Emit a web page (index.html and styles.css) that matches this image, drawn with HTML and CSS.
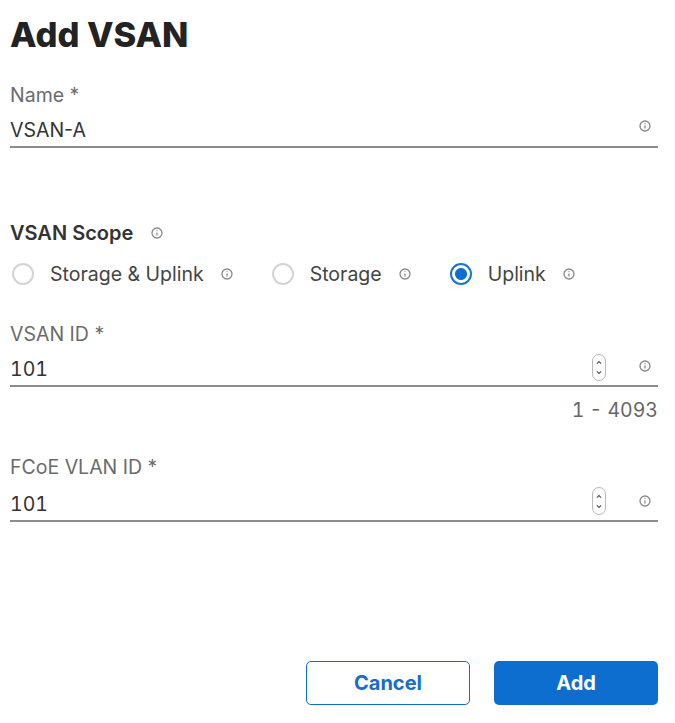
FILE: index.html
```html
<!DOCTYPE html>
<html lang="en">
<head>
  <meta charset="UTF-8">
  <title>Add VSAN</title>
  <link rel="stylesheet" href="styles.css">
</head>
<body>
  <div class="wrapper">
    <h1 class="title">Add VSAN</h1>

    <div class="field field-name">
      <div class="label">Name *</div>
      <div class="input-row">
        <span class="value">VSAN-A</span>
        <svg class="info" viewBox="0 0 12 12"><circle cx="6" cy="6" r="5" /><line x1="6" y1="5.4" x2="6" y2="8.4" /><circle class="dot" cx="6" cy="3.6" r="0.7" /></svg>
      </div>
    </div>

    <div class="scope">
      <div class="scope-title">VSAN Scope
        <svg class="info" viewBox="0 0 12 12"><circle cx="6" cy="6" r="5" /><line x1="6" y1="5.4" x2="6" y2="8.4" /><circle class="dot" cx="6" cy="3.6" r="0.7" /></svg>
      </div>
      <div class="radios">
        <label class="radio"><span class="circle"></span>Storage &amp; Uplink
          <svg class="info" viewBox="0 0 12 12"><circle cx="6" cy="6" r="5" /><line x1="6" y1="5.4" x2="6" y2="8.4" /><circle class="dot" cx="6" cy="3.6" r="0.7" /></svg>
        </label>
        <label class="radio"><span class="circle"></span>Storage
          <svg class="info" viewBox="0 0 12 12"><circle cx="6" cy="6" r="5" /><line x1="6" y1="5.4" x2="6" y2="8.4" /><circle class="dot" cx="6" cy="3.6" r="0.7" /></svg>
        </label>
        <label class="radio checked"><span class="circle"></span>Uplink
          <svg class="info" viewBox="0 0 12 12"><circle cx="6" cy="6" r="5" /><line x1="6" y1="5.4" x2="6" y2="8.4" /><circle class="dot" cx="6" cy="3.6" r="0.7" /></svg>
        </label>
      </div>
    </div>

    <div class="field field-id">
      <div class="label">VSAN ID *</div>
      <div class="input-row">
        <span class="value num">101</span>
        <span class="stepper">
          <svg viewBox="0 0 14 27"><polyline points="4.5,9 7,6.5 9.5,9" /><polyline points="4.5,18 7,20.5 9.5,18" /></svg>
        </span>
        <svg class="info" viewBox="0 0 12 12"><circle cx="6" cy="6" r="5" /><line x1="6" y1="5.4" x2="6" y2="8.4" /><circle class="dot" cx="6" cy="3.6" r="0.7" /></svg>
      </div>
      <div class="hint num">1 - 4093</div>
    </div>

    <div class="field field-fcoe">
      <div class="label">FCoE VLAN ID *</div>
      <div class="input-row">
        <span class="value num">101</span>
        <span class="stepper">
          <svg viewBox="0 0 14 27"><polyline points="4.5,9 7,6.5 9.5,9" /><polyline points="4.5,18 7,20.5 9.5,18" /></svg>
        </span>
        <svg class="info" viewBox="0 0 12 12"><circle cx="6" cy="6" r="5" /><line x1="6" y1="5.4" x2="6" y2="8.4" /><circle class="dot" cx="6" cy="3.6" r="0.7" /></svg>
      </div>
    </div>

    <div class="actions">
      <button class="btn btn-outline">Cancel</button>
      <button class="btn btn-primary">Add</button>
    </div>
  </div>
</body>
</html>
```

FILE: styles.css
```css
body { margin: 0; background: #fff; color: #333; font-family: Inter, "Noto Sans", sans-serif; }
.wrapper { width: 648px; padding: 15px 0 0 10px; }

.title { margin: 0; font-size: 34.5px; line-height: 40px; font-weight: 800; color: #232323; }

/* text fields */
.field-name { margin-top: 28px; }
.label { font-size: 19.5px; line-height: 24px; color: #6b6b6b; }
.input-row { display: flex; align-items: flex-end; margin-top: 11px; padding-bottom: 4px; border-bottom: 2px solid #8c8c8c; }
.value { flex: 1; font-size: 19.5px; line-height: 24px; color: #333; }
.num { font-variant-numeric: tabular-nums; }

.info { width: 12px; height: 12px; fill: none; stroke: #8a8a8a; stroke-width: 1.3; flex-shrink: 0; }
.info .dot { fill: #8a8a8a; stroke: none; }
.input-row .info { margin: 0 7px 10px 0; }

.stepper { width: 14px; height: 27px; margin-right: 33px; border: 1px solid #b8b8b8; border-radius: 7px; box-sizing: border-box; display: flex; align-items: center; justify-content: center; flex-shrink: 0; }
.stepper svg { width: 14px; height: 27px; display: block; fill: none; stroke: #555; stroke-width: 1.4; }

.field-id { margin-top: 36px; }
.field-id .input-row { margin-top: 8px; }
.field-id .info, .field-fcoe .info { margin-bottom: 9px; }
.field-fcoe .stepper { height: 28px; margin-bottom: 1px; }
.hint { margin-top: 11px; text-align: right; font-size: 19.5px; line-height: 24px; color: #666; }
.field-fcoe { margin-top: 33px; }
.field-fcoe .input-row { margin-top: 8px; }

/* scope radios */
.scope { margin-top: 73px; }
.scope-title { display: flex; align-items: center; gap: 18px; font-size: 20px; line-height: 24px; font-weight: 600; color: #333; }
.radios { display: flex; align-items: center; margin-top: 17px; }
.radio { display: flex; align-items: center; font-size: 19.5px; line-height: 24px; color: #444; margin-right: 37px; }
.radio .info { margin-left: 17px; }
.circle { width: 22px; height: 22px; box-sizing: border-box; border: 2px solid #d4d4d4; border-radius: 50%; margin: 0 16px 0 2px; flex-shrink: 0; }
.radio.checked .circle { border-color: #1a72d2; background: radial-gradient(circle, #0d6ecf 0 5.5px, #fff 6.5px); }

.actions { display: flex; justify-content: flex-end; gap: 24px; margin-top: 139px; }
.btn { width: 164px; height: 44px; border-radius: 5px; font-family: Inter, "Noto Sans", sans-serif; font-size: 20px; font-weight: 700; cursor: pointer; }
.btn-outline { background: #fff; color: #1a6cc9; border: 1.5px solid #0d6ecf; }
.btn-primary { background: #0d6ecf; color: #fff; border: none; }
```
